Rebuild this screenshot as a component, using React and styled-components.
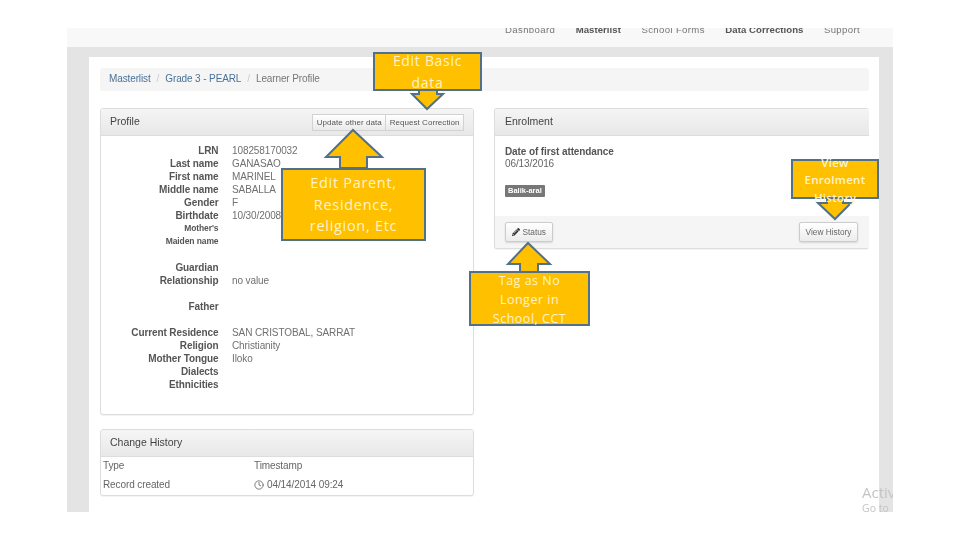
import React from "react";
import styled, { createGlobalStyle } from "styled-components";
import { Clock } from "lucide-react";
import { FaPencilAlt } from "react-icons/fa";

const Global = createGlobalStyle`
  html, body { margin: 0; padding: 0; background: #fff; }
  body { font-family: "Liberation Sans", Arial, sans-serif; }
`;

const Page = styled.div`
  position: relative;
  width: 960px;
  height: 540px;
  overflow: hidden;
  padding-top: 28px;
  box-sizing: border-box;
`;
const Slide = styled.div`
  position: relative;
  width: 826px;
  height: 484px;
  margin-left: 67px;
  background: #e4e4e4;
  overflow: hidden;
  filter: blur(0.4px);
`;
const TopNav = styled.nav`
  height: 19px;
  background: #f8f8f8;
  display: flex;
  justify-content: flex-end;
  gap: 20.5px;
  padding-right: 33px;
  overflow: hidden;
`;
const NavLink = styled.span`
  font-size: 9.6px;
  letter-spacing: ${p => (p.$active ? 0.05 : 0.35)}px;
  line-height: 12px;
  margin-top: -4px;
  color: ${p => (p.$active ? "#555" : "#777")};
  font-weight: ${p => (p.$active ? 700 : 400)};
`;
const Container = styled.main`
  margin: 10px 14px 0 22px;
  height: 455px;
  background: #fff;
  padding: 11px 10px 0 11px;
  box-sizing: border-box;
`;
const Breadcrumb = styled.div`
  height: 23px;
  background: #f5f5f5;
  border-radius: 3px;
  display: flex;
  align-items: center;
  gap: 6px;
  padding: 0 0 2px 9px;
  box-sizing: border-box;
  font-size: 10px;
  letter-spacing: -0.12px;
  margin-bottom: 17px;
`;
const Crumb = styled.span`
  color: ${p => (p.$current ? "#777" : "#4a7299")};
`;
const Sep = styled.span`
  color: #ccc;
`;
const Columns = styled.div`
  display: flex;
  gap: 20px;
`;
const LeftCol = styled.div`
  width: 374px;
  display: flex;
  flex-direction: column;
  gap: 14px;
`;
const RightCol = styled.div`
  width: 375px;
`;
const Panel = styled.section`
  background: #fff;
  border: 1px solid #ddd;
  border-right-width: ${p => (p.$open ? 0 : 1)}px;
  border-radius: 3px;
  box-shadow: 0 1px 1px rgba(0, 0, 0, 0.05);
  box-sizing: border-box;
  height: ${p => p.$h}px;
  overflow: hidden;
`;
const PanelHead = styled.header`
  height: 27px;
  box-sizing: border-box;
  border-bottom: 1px solid #ddd;
  background: linear-gradient(#f5f5f5, #e8e8e8);
  display: flex;
  align-items: center;
  justify-content: space-between;
  padding: 0 9px 2px ${p => p.$left || 9}px;
  font-size: 10.5px;
  color: #444;
`;
const BtnGroup = styled.div`
  display: flex;
  margin-top: 3px;
`;
const GroupBtn = styled.span`
  height: 15px;
  line-height: 15px;
  padding: 0 3.5px;
  font-size: 8px;
  letter-spacing: 0.05px;
  color: #555;
  border: 1px solid #d2d2d2;
  background: linear-gradient(#fff, #eaeaea);
  & + & { border-left: 0; }
`;
const Facts = styled.dl`
  margin: 8px 0 0;
  display: grid;
  grid-template-columns: 117.5px 1fr;
  column-gap: 13.5px;
  font-size: 10px;
  letter-spacing: -0.1px;
  line-height: 13px;
`;
const Label = styled.dt`
  grid-column: 1;
  text-align: right;
  font-weight: 700;
  color: #555;
  margin-top: ${p => p.$gap || 0}px;
  font-size: ${p => (p.$small ? 8.5 : 10)}px;
`;
const Value = styled.dd`
  grid-column: 2;
  margin: ${p => p.$gap || 0}px 0 0;
  color: #707070;
`;
const HistoryTable = styled.div`
  display: grid;
  grid-template-columns: 151px 1fr;
  row-gap: 7px;
  padding: 3px 0 0 2px;
  font-size: 10px;
  letter-spacing: -0.1px;
  line-height: 12px;
  color: #666;
`;
const Stamp = styled.span`
  display: inline-flex;
  align-items: center;
  gap: 3px;
`;
const EnrolBody = styled.div`
  height: 80px;
  box-sizing: border-box;
  padding: 10px 10px;
  font-size: 10px;
  letter-spacing: -0.1px;
  line-height: 12px;
  color: #666;
`;
const AttendLabel = styled.div`
  font-weight: 700;
  color: #555;
`;
const Tag = styled.span`
  display: inline-block;
  margin-top: 15px;
  padding: 0 3px;
  height: 12px;
  line-height: 12px;
  background: #777;
  color: #fff;
  font-size: 7.5px;
  font-weight: 700;
  letter-spacing: 0;
  border-radius: 1px;
`;
const PanelFoot = styled.footer`
  height: 34px;
  background: #f5f5f5;
  display: flex;
  justify-content: space-between;
  align-items: flex-start;
  padding: 6px 11px 0 10px;
`;
const FootBtn = styled.span`
  height: 20px;
  box-sizing: border-box;
  display: inline-flex;
  align-items: center;
  gap: 3px;
  padding: 0 5.5px;
  font-size: 8.3px;
  color: #666;
  border: 1px solid #ccc;
  border-radius: 2px;
  background: linear-gradient(#fff, #ececec);
  box-shadow: 0 1px 2px rgba(0, 0, 0, 0.12);
`;
const Watermark = styled.div`
  position: absolute;
  left: 795px;
  top: 455px;
  color: #c4c4c4;
  font-family: "Open Sans", sans-serif;
  white-space: nowrap;
`;
const WatermarkTitle = styled.div`
  font-size: 15px;
  line-height: 18px;
`;
const WatermarkSub = styled.div`
  font-size: 10.5px;
  line-height: 14px;
`;
const Arrows = styled.svg`
  position: absolute;
  left: 0;
  top: 0;
`;
const Callout = styled.div`
  position: absolute;
  left: ${p => p.$x}px;
  top: ${p => p.$y}px;
  width: ${p => p.$w}px;
  height: ${p => p.$h}px;
  box-sizing: border-box;
  background: #ffc000;
  border: 2px solid #51708a;
  display: flex;
  align-items: center;
  justify-content: center;
  text-align: center;
  color: #fff3cc;
  font-family: "Open Sans", sans-serif;
  font-size: ${p => p.$size}px;
  line-height: ${p => p.$lh}px;
  letter-spacing: ${p => p.$ls || 0}px;
  font-weight: ${p => p.$weight || 400};
  padding-top: ${p => p.$pt || 0}px;
`;

const facts = [
  ["LRN", "108258170032"], ["Last name", "GANASAO"], ["First name", "MARINEL"],
  ["Middle name", "SABALLA"], ["Gender", "F"], ["Birthdate", "10/30/2008"],
  ["Mother's", "", 0, true], ["Maiden name", "", 0, true],
  ["Guardian", "", 13], ["Relationship", "no value"], ["Father", "", 13],
  ["Current Residence", "SAN CRISTOBAL, SARRAT", 13], ["Religion", "Christianity"],
  ["Mother Tongue", "Iloko"], ["Dialects", ""], ["Ethnicities", ""],
];

const arrowShapes = [
  "419,90 437,90 437,94 443,94 427,109 412,94 419,94",
  "340,168 367,168 367,157 382,157 353,130 326,157 340,157",
  "827,198 843,198 843,203 851,203 835,219 818,203 827,203",
  "520,272 538,272 538,264 550,264 528,243 508,264 520,264",
];

export default function App() {
  return (
    <Page>
      <Global />
      <Slide>
        <TopNav>
          <NavLink>Dashboard</NavLink>
          <NavLink $active>Masterlist</NavLink>
          <NavLink>School Forms</NavLink>
          <NavLink $active>Data Corrections</NavLink>
          <NavLink>Support</NavLink>
        </TopNav>
        <Container>
          <Breadcrumb>
            <Crumb>Masterlist</Crumb><Sep>/</Sep>
            <Crumb>Grade 3 - PEARL</Crumb><Sep>/</Sep>
            <Crumb $current>Learner Profile</Crumb>
          </Breadcrumb>
          <Columns>
            <LeftCol>
              <Panel $h={307}>
                <PanelHead>
                  <span>Profile</span>
                  <BtnGroup>
                    <GroupBtn>Update other data</GroupBtn>
                    <GroupBtn>Request Correction</GroupBtn>
                  </BtnGroup>
                </PanelHead>
                <Facts>
                  {facts.map(([k, v, gap, small]) => (
                    <React.Fragment key={k}>
                      <Label $gap={gap} $small={small}>{k}</Label>
                      <Value $gap={gap}>{v || "\u00a0"}</Value>
                    </React.Fragment>
                  ))}
                </Facts>
              </Panel>
              <Panel $h={67}>
                <PanelHead>Change History</PanelHead>
                <HistoryTable>
                  <span>Type</span><span>Timestamp</span>
                  <span>Record created</span>
                  <Stamp><Clock size={10} strokeWidth={2} />04/14/2014 09:24</Stamp>
                </HistoryTable>
              </Panel>
            </LeftCol>
            <RightCol>
              <Panel $h={141} $open>
                <PanelHead $left={10}>Enrolment</PanelHead>
                <EnrolBody>
                  <AttendLabel>Date of first attendance</AttendLabel>
                  <div>06/13/2016</div>
                  <Tag>Balik-aral</Tag>
                </EnrolBody>
                <PanelFoot>
                  <FootBtn><FaPencilAlt size={8} color="#333" />Status</FootBtn>
                  <FootBtn>View History</FootBtn>
                </PanelFoot>
              </Panel>
            </RightCol>
          </Columns>
        </Container>
        <Watermark>
          <WatermarkTitle>Activate</WatermarkTitle>
          <WatermarkSub>Go to</WatermarkSub>
        </Watermark>
      </Slide>
      <Arrows width="960" height="540" viewBox="0 0 960 540">
        {arrowShapes.map(points => (
          <polygon key={points} points={points} fill="#ffc000" stroke="#51708a" strokeWidth="2" />
        ))}
      </Arrows>
      <Callout $x={373} $y={52} $w={109} $h={39} $size={14} $lh={22} $ls={0.7}>Edit Basic<br />data</Callout>
      <Callout $x={281} $y={168} $w={145} $h={73} $size={14.5} $lh={21.5} $ls={0.7}>Edit Parent,<br />Residence,<br />religion, Etc</Callout>
      <Callout $x={791} $y={159} $w={88} $h={40} $size={11.5} $lh={17.5} $ls={0.3} $weight={600} $pt={2}>View<br />Enrolment<br />History</Callout>
      <Callout $x={469} $y={271} $w={121} $h={55} $size={12.5} $lh={19} $ls={0.5} $pt={2}>Tag as No<br />Longer in<br />School, CCT</Callout>
    </Page>
  );
}
